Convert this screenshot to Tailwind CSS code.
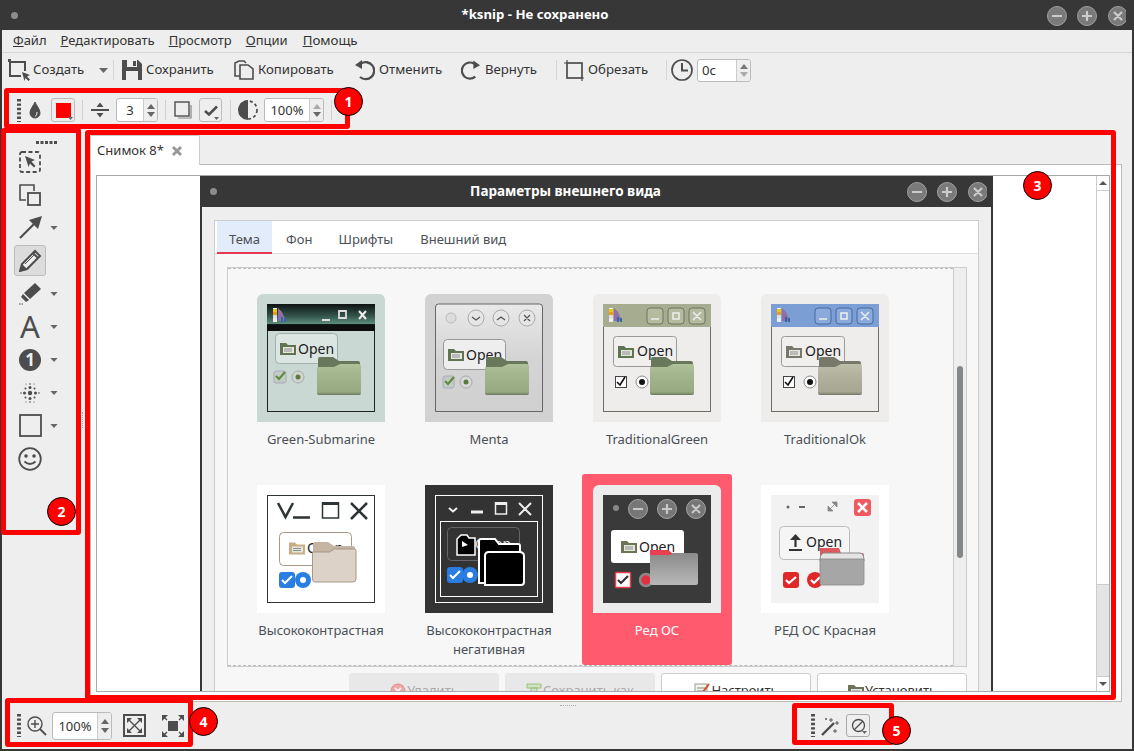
<!DOCTYPE html>
<html lang="ru">
<head>
<meta charset="utf-8">
<title>ksnip</title>
<script src="https://cdn.jsdelivr.net/npm/@tailwindcss/browser@4"></script>
</head>
<body class="bg-[#373737]">
<svg class="absolute w-0 h-0" aria-hidden="true">
  <defs>
    <linearGradient id="shade" x1="0" y1="0" x2="0" y2="1"><stop offset="0" stop-color="#fff" stop-opacity=".12"/><stop offset=".9" stop-color="#000" stop-opacity=".08"/><stop offset="1" stop-color="#000" stop-opacity=".35"/></linearGradient>
    <linearGradient id="gray" x1="0" y1="0" x2="0" y2="1"><stop offset="0" stop-color="#8a8a8a"/><stop offset=".6" stop-color="#a6a6a6"/><stop offset="1" stop-color="#b8b8b8"/></linearGradient>
    <linearGradient id="sub" x1="0" y1="0" x2="0" y2="1"><stop offset="0" stop-color="#0e1312"/><stop offset=".45" stop-color="#34564c"/><stop offset=".75" stop-color="#5f907f"/><stop offset=".76" stop-color="#0c0f0e"/><stop offset="1" stop-color="#0c0f0e"/></linearGradient>
    <linearGradient id="menta" x1="0" y1="0" x2="0" y2="1"><stop offset="0" stop-color="#e9e9e9"/><stop offset=".5" stop-color="#d4d4d4"/><stop offset="1" stop-color="#d0d0d0"/></linearGradient>
    <symbol id="ft" viewBox="0 0 44 40"><path d="M1 14V3q0-2 2-2h13l6 4h19q2 0 2 2v7z" fill="currentColor"/></symbol>
    <symbol id="fb" viewBox="0 0 44 40"><path d="M0 37V12q0-1 1-1h16l6-3h19q2 0 2 2v27q0 2-2 2H2q-2 0-2-2z" fill="currentColor"/><path d="M0 37V12q0-1 1-1h16l6-3h19q2 0 2 2v27q0 2-2 2H2q-2 0-2-2z" fill="url(#shade)"/></symbol>
    <symbol id="sf" viewBox="0 0 16 14"><path d="M0 13V1h6l2 2h8v10z" fill="currentColor"/><rect x="3" y="5" width="11" height="6" fill="#e6e6e0"/><path d="M4 7h8M4 9h8" stroke="#777" stroke-width=".8"/></symbol>
    <symbol id="pal" viewBox="0 0 16 16"><path d="M1 1h4v14H1z" fill="#eee"/><path d="M1 2h4v3H1z" fill="#f4c20d"/><path d="M1 5h4v3H1z" fill="#f09a1a"/><path d="M1 8h4v3H1z" fill="#ddd"/><path d="M6 1l4 4 4 9H6z" fill="#8e6fa8"/><path d="M9 10h2v5H9zM12 11h2v4h-2z" fill="#3465a4"/></symbol>
    <symbol id="hg" viewBox="0 0 4 23"><path d="M2 0v23" stroke="#4d4d4d" stroke-width="4" stroke-dasharray="2.4 2"/></symbol>
    <symbol id="dn" viewBox="0 0 9 5"><path d="M0 0h9L4.500 5z" fill="#666"/></symbol>
  </defs>
</svg>

<div class="relative w-[1134px] h-[751px] overflow-hidden bg-[#373737] px-[2px] pb-[2px] font-['Noto_Sans',sans-serif] text-[13px] text-[#333]">

  <!-- title -->
  <div class="h-[30px] flex items-center justify-between pl-[9px] pr-[6px]">
    <div class="w-[7px] h-[7px] rounded-full bg-[#8c8c8c]"></div>
    <div class="-mr-[6px] font-bold text-[13.2px] text-white">*ksnip - Не сохранено</div>
    <svg width="80" height="22" viewBox="0 0 80 22">
      <g fill="#7a7a7a" stroke="#a0a0a0"><circle cx="11" cy="12" r="9.500"/><circle cx="41" cy="12" r="9.500"/><circle cx="72" cy="12" r="9.500"/></g>
      <path d="M6 12h10M41 7v10M36 12h10M68 8l8 8M76 8l-8 8" stroke="#ccc" stroke-width="2.200" fill="none"/>
    </svg>
  </div>

  <div class="h-[719px] flex flex-col bg-[#eee]">
    <!-- menu -->
    <div class="h-[23px] flex items-center gap-[14px] pl-[11px] border-b border-[#d6d6d6]">
      <span><span class="underline">Ф</span>айл</span>
      <span><span class="underline">Р</span>едактировать</span>
      <span><span class="underline">П</span>росмотр</span>
      <span><span class="underline">О</span>пции</span>
      <span class="ml-[1px] text-[13.3px]"><span class="underline">П</span>омощь</span>
    </div>

    <!-- main toolbar -->
    <div class="h-[34px] flex items-center pl-[6px] text-[13.2px]">
      <div class="w-[91px] flex items-center">
        <svg width="24" height="24" viewBox="0 0 24 24" class="-ml-[1px] mr-[2px]"><path d="M3 4h15v9M3 4v14h11" fill="none" stroke="#4d4d4d" stroke-width="2"/><path d="M1 1h3v3H1z" fill="#4d4d4d"/><path d="M15 14l8 3-3 1.500 3 3-1.500 1.500-3-3-1 3z" fill="#4d4d4d"/></svg>
        <span>Создать</span>
      </div>
      <div class="w-[14px]"><svg width="9" height="5" class="block"><use href="#dn"/></svg></div>
      <div class="w-[9px] h-[20px]"><div class="w-px h-full bg-[#d6d6d6]"></div></div>
      <div class="w-[112px] flex items-center gap-[4px]">
        <svg width="20" height="20" viewBox="0 0 20 20"><path fill-rule="evenodd" d="M0 0h16l4 4v16H0zM5 0v7h10V0zM4 11v9h12v-9z" fill="#4d4d4d"/><path d="M11 1h3v5h-3z" fill="#4d4d4d"/></svg>
        <span>Сохранить</span>
      </div>
      <div class="w-[120px] flex items-center gap-[4px]">
        <svg width="20" height="20" viewBox="0 0 20 20"><path d="M6 16H1V3l4-2h5l2 2" fill="none" stroke="#4d4d4d" stroke-width="1.600"/><path d="M6 5h8l5 4v10H6z" fill="#eee" stroke="#4d4d4d" stroke-width="1.600"/></svg>
        <span>Копировать</span>
      </div>
      <div class="w-[107px] flex items-center gap-[4px]">
        <svg width="21" height="22" viewBox="0 0 21 22"><path d="M7 4.500A8.500 8.500 0 1 1 6 18" fill="none" stroke="#4d4d4d" stroke-width="2.300"/><path d="M1 6l7-5v9z" fill="#4d4d4d"/></svg>
        <span>Отменить</span>
      </div>
      <div class="w-[95px] flex items-center gap-[4px]">
        <svg width="20" height="22" viewBox="0 0 21 22"><path d="M14 4.500A8.500 8.500 0 1 0 15 18" fill="none" stroke="#4d4d4d" stroke-width="2.300"/><path d="M20 6l-7-5v9z" fill="#4d4d4d"/></svg>
        <span>Вернуть</span>
      </div>
      <div class="w-[8px] h-[20px]"><div class="w-px h-full bg-[#d6d6d6]"></div></div>
      <div class="w-[102px] flex items-center gap-[4px]">
        <svg width="20" height="21" viewBox="0 0 20 21"><rect x="3" y="3" width="15" height="15" fill="none" stroke="#4d4d4d" stroke-width="1.700"/><path d="M3 0v3M0 3h3M18 18v3M18 18h2" stroke="#4d4d4d" stroke-width="1.200"/></svg>
        <span>Обрезать</span>
      </div>
      <div class="w-[5px] h-[20px]"><div class="w-px h-full bg-[#d6d6d6]"></div></div>
      <div class="w-[26px]">
        <svg width="22" height="22" viewBox="0 0 22 22"><circle cx="11" cy="11" r="10" fill="none" stroke="#4d4d4d" stroke-width="1.700"/><path d="M11 4v7.500h6" fill="none" stroke="#4d4d4d" stroke-width="2"/></svg>
      </div>
      <div class="w-[54px] h-[23px] flex border border-[#bbb] rounded-[3px] bg-white overflow-hidden">
        <div class="flex-1 pl-[4px] leading-[21px]">0с</div>
        <div class="w-[14px] bg-[#eee] border-l border-[#ccc] flex flex-col items-center justify-center gap-[3px]"><div class="w-0 h-0 border-x-[4px] border-x-transparent border-b-[5px] border-b-[#777]"></div><div class="w-0 h-0 border-x-[4px] border-x-transparent border-t-[5px] border-t-[#aaa]"></div></div>
      </div>
    </div>

    <!-- tool settings toolbar -->
    <div class="h-[43px] flex items-center pl-[15px] pt-[3px]">
      <svg width="4" height="23" class="mr-[8px]"><use href="#hg"/></svg>
      <svg width="12" height="18" viewBox="0 0 12 18" class="mr-[10px]"><path d="M6 1C5 4 1 8 1 12a5 5 0 0 0 10 0C11 8 7 4 6 1z" fill="#4d4d4d" stroke="#4d4d4d"/><path d="M8 11a3 4 0 0 1-2 4.500" stroke="#eee" fill="none"/></svg>
      <div class="w-[24px] h-[24px] border border-[#bbb] rounded-[3px] flex items-center justify-center relative">
        <div class="w-[15px] h-[15px] bg-[#f00]"></div>
        <svg width="5" height="3" class="absolute right-[1px] bottom-[1px]"><use href="#dn"/></svg>
      </div>
      <div class="ml-[7px] w-px h-[20px] bg-[#d0d0d0]"></div>
      <svg width="18" height="18" viewBox="0 0 18 18" class="ml-[8px]"><path d="M0 9h18" stroke="#4d4d4d" stroke-width="2"/><path d="M9 1.500L5.500 6h7zM9 16.500L5.500 12h7z" fill="#4d4d4d"/></svg>
      <div class="ml-[7px] w-[42px] h-[24px] flex border border-[#bbb] rounded-[3px] bg-white overflow-hidden">
        <div class="flex-1 text-center leading-[22px]">3</div>
        <div class="w-[14px] bg-[#eee] border-l border-[#ccc] flex flex-col items-center justify-center gap-[3px]"><div class="w-0 h-0 border-x-[4px] border-x-transparent border-b-[5px] border-b-[#666]"></div><div class="w-0 h-0 border-x-[4px] border-x-transparent border-t-[5px] border-t-[#666]"></div></div>
      </div>
      <div class="ml-[7px] w-px h-[20px] bg-[#d0d0d0]"></div>
      <svg width="18" height="19" viewBox="0 0 18 19" class="ml-[8px]"><rect x="1" y="1" width="14" height="14" fill="none" stroke="#4d4d4d" stroke-width="1.400"/><path d="M17 4v13H4" fill="none" stroke="#888" stroke-width="1.200"/></svg>
      <div class="ml-[7px] w-[23px] h-[24px] border border-[#bbb] rounded-[3px] flex items-center justify-center relative">
        <svg width="14" height="11" viewBox="0 0 14 11"><path d="M1 6l4 3.500L13 1.500" fill="none" stroke="#4d4d4d" stroke-width="2.500"/></svg>
        <svg width="5" height="3" class="absolute right-[2px] bottom-[1px]"><use href="#dn"/></svg>
      </div>
      <div class="ml-[8px] w-px h-[20px] bg-[#d0d0d0]"></div>
      <svg width="20" height="20" viewBox="0 0 20 20" class="ml-[7px]"><path d="M10 0a10 10 0 0 0 0 20z" fill="#4d4d4d"/><circle cx="10" cy="10" r="9" fill="none" stroke="#4d4d4d" stroke-width="1.700" stroke-dasharray="3 2.500"/></svg>
      <div class="ml-[6px] w-[60px] h-[24px] flex border border-[#bbb] rounded-[3px] bg-white overflow-hidden">
        <div class="flex-1 text-center leading-[22px]">100%</div>
        <div class="w-[14px] bg-[#eee] border-l border-[#ccc] flex flex-col items-center justify-center gap-[3px]"><div class="w-0 h-0 border-x-[4px] border-x-transparent border-b-[5px] border-b-[#aaa]"></div><div class="w-0 h-0 border-x-[4px] border-x-transparent border-t-[5px] border-t-[#666]"></div></div>
      </div>
      <div class="ml-[7px] w-px h-[20px] bg-[#d0d0d0]"></div>
    </div>

    <!-- body -->
    <div class="h-[572px] flex">
      <!-- tools -->
      <div class="w-[80px] shrink-0 pt-[11px]">
        <svg width="22" height="3" class="block ml-[34px] mb-[1px]"><path d="M0 1.500h22" stroke="#4d4d4d" stroke-width="3" stroke-dasharray="3 1.500"/></svg>
        <div class="h-[33px] pl-[12px] flex items-center"><div class="w-[32px] h-[31px] flex items-center justify-center">
          <svg width="22" height="22" viewBox="0 0 22 22"><rect x="1" y="1" width="20" height="20" rx="2" fill="none" stroke="#4d4d4d" stroke-width="1.800" stroke-dasharray="4 2.500"/><path d="M6 5l10 4-3.500 1.500L16.500 15 15 16.500 11 12.500 9.500 16z" fill="#4d4d4d"/></svg>
        </div></div>
        <div class="h-[33px] pl-[12px] flex items-center"><div class="w-[32px] h-[31px] flex items-center justify-center">
          <svg width="22" height="22" viewBox="0 0 22 22"><path d="M7 16H1V1h14v6" fill="none" stroke="#4d4d4d" stroke-width="1.600"/><rect x="9" y="9" width="12" height="12" fill="none" stroke="#4d4d4d" stroke-width="1.800"/></svg>
        </div></div>
        <div class="h-[33px] pl-[12px] flex items-center"><div class="w-[32px] h-[31px] flex items-center justify-center">
          <svg width="23" height="23" viewBox="0 0 23 23"><path d="M1 22L17 6" stroke="#4d4d4d" stroke-width="2.200"/><path d="M23 0l-4 13-9-9z" fill="#4d4d4d"/></svg>
        </div><svg width="8" height="4" class="ml-[4px]"><use href="#dn"/></svg></div>
        <div class="h-[33px] pl-[12px] flex items-center"><div class="w-[32px] h-[31px] flex items-center justify-center bg-[#dcdcdc] border border-[#bbb] rounded-[3px]">
          <svg width="23" height="23" viewBox="0 0 23 23"><path d="M1 22l2-7L16 2l5 5L8 20z" fill="#eee" stroke="#4d4d4d" stroke-width="2"/><path d="M1 22l2-7 5 5z" fill="#4d4d4d"/><path d="M14 4l5 5" stroke="#4d4d4d" stroke-width="2"/><path d="M6 15L16 5" stroke="#4d4d4d"/></svg>
        </div></div>
        <div class="h-[33px] pl-[12px] flex items-center"><div class="w-[32px] h-[31px] flex items-center justify-center">
          <svg width="23" height="23" viewBox="0 0 23 23"><path d="M16 1l6 6L11 17l-6-6z" fill="#4d4d4d"/><path d="M4 12l6 6-3 2-5-5z" fill="#4d4d4d"/><path d="M0 22h5" stroke="#4d4d4d" stroke-dasharray="1.500 1"/></svg>
        </div><svg width="8" height="4" class="ml-[4px]"><use href="#dn"/></svg></div>
        <div class="h-[33px] pl-[12px] flex items-center"><div class="w-[32px] h-[31px] flex items-center justify-center text-[31px] leading-none text-[#4d4d4d]">A</div><svg width="8" height="4" class="ml-[4px]"><use href="#dn"/></svg></div>
        <div class="h-[33px] pl-[12px] flex items-center"><div class="w-[32px] h-[31px] flex items-center justify-center"><div class="w-[22px] h-[22px] rounded-full bg-[#4d4d4d] text-[#eee] font-bold text-[17px] leading-[22px] text-center">1</div></div><svg width="8" height="4" class="ml-[4px]"><use href="#dn"/></svg></div>
        <div class="h-[33px] pl-[12px] flex items-center"><div class="w-[32px] h-[31px] flex items-center justify-center">
          <svg width="20" height="20" viewBox="0 0 20 20" fill="#4d4d4d"><circle cx="10" cy="10" r="2.200"/><circle cx="4.500" cy="10" r="1.500"/><circle cx="15.500" cy="10" r="1.500"/><circle cx="10" cy="4.500" r="1.500"/><circle cx="10" cy="15.500" r="1.500"/><circle cx="5.500" cy="5.500" r="1"/><circle cx="14.500" cy="5.500" r="1"/><circle cx="5.500" cy="14.500" r="1"/><circle cx="14.500" cy="14.500" r="1"/><circle cx="10" cy="1" r=".8"/><circle cx="10" cy="19" r=".8"/><circle cx="1" cy="10" r=".8"/><circle cx="19" cy="10" r=".8"/><circle cx="6" cy="1" r=".6"/><circle cx="14" cy="1" r=".6"/><circle cx="6" cy="19" r=".6"/><circle cx="14" cy="19" r=".6"/></svg>
        </div><svg width="8" height="4" class="ml-[4px]"><use href="#dn"/></svg></div>
        <div class="h-[33px] pl-[12px] flex items-center"><div class="w-[32px] h-[31px] flex items-center justify-center">
          <svg width="23" height="23" viewBox="0 0 23 23"><rect x="1" y="1" width="21" height="21" fill="none" stroke="#4d4d4d" stroke-width="1.800"/></svg>
        </div><svg width="8" height="4" class="ml-[4px]"><use href="#dn"/></svg></div>
        <div class="h-[33px] pl-[12px] flex items-center"><div class="w-[32px] h-[31px] flex items-center justify-center">
          <svg width="24" height="24" viewBox="0 0 24 24"><circle cx="12" cy="12" r="10.800" fill="none" stroke="#4d4d4d" stroke-width="1.800"/><circle cx="8" cy="9" r="1.800" fill="#4d4d4d"/><circle cx="16" cy="9" r="1.800" fill="#4d4d4d"/><path d="M6.500 14.500q5.500 5 11 0" fill="none" stroke="#4d4d4d" stroke-width="1.800"/></svg>
        </div></div>
      </div>

      <!-- document area -->
      <div class="ml-[8px] w-[1032px] pt-[5px] flex flex-col">
        <div class="h-[29px] flex">
          <div class="w-[110px] h-[30px] z-10 bg-white border-x border-t border-[#ccc] rounded-t-[2px] flex items-center pl-[6px]">
            <span>Снимок 8*</span>
            <svg width="12" height="12" viewBox="0 0 12 12" class="ml-[7px]"><path d="M2 2l8 8M10 2l-8 8" stroke="#9a9a9a" stroke-width="3"/></svg>
          </div>
        </div>
        <div class="flex-1 min-h-0 bg-white border border-[#bbb] pt-[10px] pl-[5px]">
          <div class="w-[1014px] h-[517px] border border-[#aaa] flex overflow-hidden">
            <div class="w-[103px] shrink-0"></div>

            <!-- the captured dialog -->
            <div class="w-[793px] shrink-0 flex flex-col">
              <div class="h-[31px] shrink-0 bg-[#373737] flex items-center pl-[10px] pr-[6px] justify-between">
                <div class="w-[7px] h-[7px] rounded-full bg-[#8c8c8c]"></div>
                <div class="ml-[7px] font-bold text-[13.5px] text-white">Параметры внешнего вида</div>
                <svg width="80" height="22" viewBox="0 0 80 22">
                  <g fill="#7a7a7a" stroke="#a0a0a0"><circle cx="10" cy="11" r="9.500"/><circle cx="40" cy="11" r="9.500"/><circle cx="71" cy="11" r="9.500"/></g>
                  <path d="M5 11h10M40 6v10M35 11h10M67 7l8 8M75 7l-8 8" stroke="#ccc" stroke-width="2.200" fill="none"/>
                </svg>
              </div>
              <div class="flex-1 bg-[#eee] border-x-2 border-[#373737] pt-[13px] pl-[12px] pr-[13px]">
                <div class="w-[765px] h-[500px] bg-[#f7f7f7] border border-[#ccc] border-b-0">
                  <div class="h-[33px] bg-white border-b border-[#ddd] flex pl-[2px] text-[#4a4f55]">
                    <div class="px-[12px] h-[33px] bg-[#e3ecfa] border-b-2 border-[#e6394f] leading-[36px]">Тема</div>
                    <div class="ml-[1px] px-[13px] leading-[36px]">Фон</div>
                    <div class="px-[13px] leading-[36px]">Шрифты</div>
                    <div class="px-[14px] leading-[36px]">Внешний вид</div>
                  </div>
                  <div class="pt-[13px] pl-[12px]">
                    <div class="w-[740px] h-[400px] border border-[#ccc] flex bg-[#f7f7f7]">
                      <div class="flex-1 border-y border-dashed border-[#bbb] pt-[14px] pl-[9px] overflow-hidden">
                        <div class="grid grid-cols-[repeat(4,168px)] auto-rows-[191px]">

                          <div class="w-[150px] mx-auto pt-[11px] flex flex-col items-center text-[#4a4f55]">
                            <svg width="128" height="128" viewBox="0 0 128 128">
                              <path d="M0 128V6a6 6 0 0 1 6-6h116a6 6 0 0 1 6 6v122z" fill="#c9d8d3"/>
                              <rect x="10.500" y="10.500" width="107" height="107" fill="#c9d8d3" stroke="#1e2422"/>
                              <rect x="10" y="10" width="108" height="27" fill="url(#sub)"/>
                              <use href="#pal" x="15" y="13" width="16" height="16"/>
                              <path d="M65 26h8M82 17h7v7h-7z" fill="none" stroke="#ddd" stroke-width="1.800"/>
                              <path d="M102 17l7 8M109 17l-7 8" stroke="#eee" stroke-width="2"/>
                              <rect x="18.500" y="39.500" width="62" height="30" rx="4" fill="#dbe6e2" stroke="#9fb0aa"/>
                              <use href="#sf" x="23" y="48" width="16" height="14" color="#5f7450"/>
                              <text x="41" y="60" font-family="Noto Sans" font-size="14" fill="#222">Open</text>
                              <rect x="17" y="77" width="12" height="12" rx="2" fill="#c2ccc2" stroke="#aab"/><path d="M19 82l3 3 6-7" fill="none" stroke="#5c8a3a" stroke-width="2"/>
                              <circle cx="41" cy="83" r="6" fill="#cfd5d0" stroke="#aaa"/><circle cx="41" cy="83" r="2.500" fill="#5c7a3a"/>
                              <use href="#ft" x="60" y="62" width="44" height="40" color="#67795a"/><use href="#fb" x="60" y="62" width="44" height="40" color="#a5b98d"/>
                            </svg>
                            <div class="mt-[8px] leading-[19px] text-center">Green-Submarine</div>
                          </div>

                          <div class="w-[150px] mx-auto pt-[11px] flex flex-col items-center text-[#4a4f55]">
                            <svg width="128" height="128" viewBox="0 0 128 128">
                              <path d="M0 128V6a6 6 0 0 1 6-6h116a6 6 0 0 1 6 6v122z" fill="#d2d2d2"/>
                              <path d="M10.500 117.500V13a3 3 0 0 1 3-3h101a3 3 0 0 1 3 3v104.500z" fill="url(#menta)" stroke="#666"/>
                              <circle cx="26" cy="24" r="5" fill="#ddd" stroke="#bbb"/>
                              <g fill="#e6e6e6" stroke="#aaa"><circle cx="51" cy="24" r="8"/><circle cx="76" cy="24" r="8"/><circle cx="102" cy="24" r="8"/></g>
                              <path d="M47 23l4 3 4-3M72 26l4-3 4 3M99 21l6 6M105 21l-6 6" fill="none" stroke="#555" stroke-width="1.300"/>
                              <rect x="18.500" y="45.500" width="62" height="30" rx="4" fill="#eee" stroke="#999"/>
                              <use href="#sf" x="23" y="54" width="16" height="14" color="#5f7450"/>
                              <text x="41" y="66" font-family="Noto Sans" font-size="14" fill="#222">Open</text>
                              <rect x="18" y="82" width="11" height="12" rx="2" fill="#c4cbc4" stroke="#aab"/><path d="M20 87l3 3 6-7" fill="none" stroke="#5c8a3a" stroke-width="2"/>
                              <circle cx="41" cy="88" r="6" fill="#d8d8d8" stroke="#aaa"/><circle cx="41" cy="88" r="2.500" fill="#5c7a3a"/>
                              <use href="#ft" x="60" y="62" width="44" height="40" color="#67795a"/><use href="#fb" x="60" y="62" width="44" height="40" color="#a5b98d"/>
                            </svg>
                            <div class="mt-[8px] leading-[19px] text-center">Menta</div>
                          </div>

                          <div class="w-[150px] mx-auto pt-[11px] flex flex-col items-center text-[#4a4f55]">
                            <svg width="128" height="128" viewBox="0 0 128 128">
                              <path d="M0 128V6a6 6 0 0 1 6-6h116a6 6 0 0 1 6 6v122z" fill="#eeedeb"/>
                              <rect x="10.500" y="10.500" width="107" height="107" fill="#eeedeb" stroke="#6f6f68"/>
                              <rect x="10" y="10" width="108" height="23" fill="#a5ac90"/>
                              <use href="#pal" x="15" y="13" width="16" height="16"/>
                              <g fill="#b4bb9f" stroke="#6f7560"><rect x="54" y="14" width="16" height="16" rx="3"/><rect x="75" y="14" width="16" height="16" rx="3"/><rect x="96" y="14" width="16" height="16" rx="3"/></g>
                              <path d="M58 25h8M80 19h6v6h-6zM100 18l8 8M108 18l-8 8" fill="none" stroke="#eee" stroke-width="1.500"/>
                              <rect x="20.500" y="42.500" width="63" height="30" rx="3" fill="#f0efed" stroke="#999"/>
                              <use href="#sf" x="25" y="51" width="16" height="14" color="#5f7450"/>
                              <text x="44" y="62" font-family="Noto Sans" font-size="14" fill="#222">Open</text>
                              <rect x="22.500" y="82.500" width="11" height="11" fill="#fff" stroke="#444"/><path d="M24 88l3 3 5-8" fill="none" stroke="#111" stroke-width="1.600"/>
                              <circle cx="49" cy="88" r="6" fill="#fff" stroke="#888"/><circle cx="49" cy="88" r="3" fill="#111"/>
                              <use href="#ft" x="57" y="62" width="44" height="40" color="#67795a"/><use href="#fb" x="57" y="62" width="44" height="40" color="#a5b98d"/>
                            </svg>
                            <div class="mt-[8px] leading-[19px] text-center">TraditionalGreen</div>
                          </div>

                          <div class="w-[150px] mx-auto pt-[11px] flex flex-col items-center text-[#4a4f55]">
                            <svg width="128" height="128" viewBox="0 0 128 128">
                              <path d="M0 128V6a6 6 0 0 1 6-6h116a6 6 0 0 1 6 6v122z" fill="#eeedeb"/>
                              <rect x="10.500" y="10.500" width="107" height="107" fill="#eeedeb" stroke="#6f6f68"/>
                              <rect x="10" y="10" width="108" height="23" fill="#7b9fd4"/>
                              <use href="#pal" x="15" y="13" width="16" height="16"/>
                              <g fill="#8aaadb" stroke="#46699f"><rect x="54" y="14" width="16" height="16" rx="3"/><rect x="75" y="14" width="16" height="16" rx="3"/><rect x="96" y="14" width="16" height="16" rx="3"/></g>
                              <path d="M58 25h8M80 19h6v6h-6zM100 18l8 8M108 18l-8 8" fill="none" stroke="#eee" stroke-width="1.500"/>
                              <rect x="20.500" y="42.500" width="63" height="30" rx="3" fill="#f0efed" stroke="#999"/>
                              <use href="#sf" x="25" y="51" width="16" height="14" color="#77786a"/>
                              <text x="44" y="62" font-family="Noto Sans" font-size="14" fill="#222">Open</text>
                              <rect x="22.500" y="82.500" width="11" height="11" fill="#fff" stroke="#444"/><path d="M24 88l3 3 5-8" fill="none" stroke="#111" stroke-width="1.600"/>
                              <circle cx="49" cy="88" r="6" fill="#fff" stroke="#888"/><circle cx="49" cy="88" r="3" fill="#111"/>
                              <use href="#ft" x="57" y="62" width="44" height="40" color="#78796a"/><use href="#fb" x="57" y="62" width="44" height="40" color="#b5b5a0"/>
                            </svg>
                            <div class="mt-[8px] leading-[19px] text-center">TraditionalOk</div>
                          </div>

                          <div class="w-[150px] mx-auto pt-[11px] flex flex-col items-center text-[#4a4f55]">
                            <svg width="128" height="128" viewBox="0 0 128 128">
                              <rect width="128" height="128" fill="#fff"/>
                              <rect x="10.500" y="10.500" width="107" height="107" fill="#fff" stroke="#2e3436"/>
                              <path d="M21 18l7.500 14L36 18M36 32.500h17M94 18l16 16M110 18L94 34" fill="none" stroke="#2e3436" stroke-width="2.500"/>
                              <rect x="65.500" y="18" width="16" height="15" fill="none" stroke="#2e3436" stroke-width="1.500"/><rect x="65" y="17" width="17" height="3" fill="#2e3436"/>
                              <rect x="22.500" y="47.500" width="72" height="33" rx="4" fill="#fff" stroke="#a79887"/>
                              <use href="#sf" x="32" y="56" width="16" height="15" color="#c9ae85"/>
                              <text x="50" y="68" font-family="Noto Sans" font-size="14" fill="#222">Open</text>
                              <rect x="22" y="87" width="16" height="16" rx="3" fill="#2a7de1"/><path d="M25 95l3 3 7-7" fill="none" stroke="#fff" stroke-width="2"/>
                              <circle cx="46" cy="95" r="8" fill="#2a7de1"/><circle cx="46" cy="95" r="3" fill="#fff"/>
                              <use href="#ft" x="55" y="54" width="44" height="44" color="#c4b4a2"/>
                              <path d="M55.500 94V68q0-1 1-1h16l5-3h20q1.500 0 1.500 1.500V94q0 3-3 3H58q-2.500 0-2.500-3z" fill="#dcd2c7" stroke="#a79887"/>
                            </svg>
                            <div class="mt-[8px] leading-[19px] text-center">Высококонтрастная</div>
                          </div>

                          <div class="w-[150px] mx-auto pt-[11px] flex flex-col items-center text-[#4a4f55]">
                            <svg width="128" height="128" viewBox="0 0 128 128">
                              <rect width="128" height="128" fill="#333"/>
                              <rect x="10.500" y="10.500" width="107" height="107" fill="#333" stroke="#fff"/>
                              <rect x="15.500" y="36.500" width="97" height="75" fill="none" stroke="#fff"/>
                              <path d="M24 23l4 3.500 4-3.500M94 18l12 12M106 18L94 30" fill="none" stroke="#eee" stroke-width="2"/>
                              <path d="M46 27h12" stroke="#eee" stroke-width="3"/>
                              <rect x="70.500" y="18" width="11" height="11" fill="none" stroke="#eee" stroke-width="1.500"/><rect x="70" y="17" width="12" height="3" fill="#eee"/>
                              <rect x="22.500" y="42.500" width="72" height="33" rx="4" fill="#333" stroke="#666"/>
                              <path d="M32 70V54l4-4h6l2 3h6v17z" fill="#000" stroke="#fff" stroke-width="1.500"/><path d="M37 62v-6l6 4z" fill="#fff"/>
                              <text x="50" y="64" font-family="Noto Sans" font-size="14" fill="#ddd">Open</text>
                              <rect x="22" y="82" width="16" height="16" rx="3" fill="#2a7de1"/><path d="M25 90l3 3 7-7" fill="none" stroke="#fff" stroke-width="2"/>
                              <circle cx="45" cy="90" r="8" fill="#2a7de1"/><circle cx="45" cy="90" r="3" fill="#fff"/>
                              <path d="M54 98V56q0-2 2-2h14l4 5h19q2 0 2 2v37z" fill="#000" stroke="#fff" stroke-width="2"/>
                              <path d="M60 100V71q0-4 4-4h30q5 0 5 4v26q0 3-3 3z" fill="#000" stroke="#fff" stroke-width="2"/>
                            </svg>
                            <div class="mt-[8px] leading-[19px] text-center">Высококонтрастная<br>негативная</div>
                          </div>

                          <div class="w-[150px] mx-auto pt-[11px] flex flex-col items-center bg-[#ff5a6e] rounded-[3px] text-white">
                            <svg width="128" height="128" viewBox="0 0 128 128">
                              <path d="M0 128V6a6 6 0 0 1 6-6h116a6 6 0 0 1 6 6v122z" fill="#ececec"/>
                              <rect x="10" y="10" width="108" height="108" fill="#3a3a3a"/>
                              <circle cx="23" cy="23" r="3" fill="#888"/>
                              <g fill="#777" stroke="#a5a5a5"><circle cx="45" cy="24" r="9.500"/><circle cx="74" cy="24" r="9.500"/><circle cx="103" cy="24" r="9.500"/></g>
                              <path d="M40 24h10M74 19v10M69 24h10M99 20l8 8M107 20l-8 8" fill="none" stroke="#c8c8c8" stroke-width="2.200"/>
                              <rect x="18" y="45" width="73" height="33" rx="3" fill="#fff"/>
                              <use href="#sf" x="28" y="55" width="16" height="14" color="#6d7355"/>
                              <text x="46" y="67" font-family="Noto Sans" font-size="14" fill="#222">Open</text>
                              <rect x="22.500" y="87.500" width="15" height="15" rx="1" fill="#fff" stroke="#e0404f" stroke-width="1.500"/><path d="M25 95l3 3 7-7" fill="none" stroke="#333" stroke-width="2.200"/>
                              <circle cx="53" cy="95" r="6" fill="#e0303f" stroke="#888" stroke-width="2.500"/>
                              <path d="M57 72V65h18l4 3h24v6z" fill="#e8404e"/>
                              <path d="M57 98V70h20l3-2h23q2 0 2 2v28q0 2-2 2H59q-2 0-2-2z" fill="url(#gray)"/>
                            </svg>
                            <div class="mt-[8px] leading-[19px] text-center">Ред ОС</div>
                          </div>

                          <div class="w-[150px] mx-auto pt-[11px] flex flex-col items-center text-[#4a4f55]">
                            <svg width="128" height="128" viewBox="0 0 128 128">
                              <rect width="128" height="128" fill="#fff"/>
                              <rect x="10" y="10" width="108" height="108" fill="#f2f2f2"/>
                              <circle cx="27" cy="22" r="1.500" fill="#666"/><path d="M38 22h6" stroke="#666" stroke-width="2"/>
                              <path d="M67 26l8-8M67 26v-5l5 5zM76 17v5l-5-5z" fill="#888" stroke="#888" stroke-width=".8"/>
                              <rect x="93" y="14" width="17" height="17" rx="3" fill="#ee5a5f"/><path d="M97 18l9 9M106 18l-9 9" stroke="#fff" stroke-width="2.500"/>
                              <rect x="18.500" y="41.500" width="70" height="33" rx="4" fill="#f5f5f5" stroke="#bbb"/>
                              <path d="M28 65h13M34.500 51v11" stroke="#333" stroke-width="2.200"/><path d="M34.500 49l5.500 6H29z" fill="#333"/>
                              <text x="45" y="62" font-family="Noto Sans" font-size="14" fill="#222">Open</text>
                              <rect x="22" y="87" width="16" height="16" rx="3" fill="#e02828"/><path d="M25 95l3 3 7-6" fill="none" stroke="#fff" stroke-width="2.200"/>
                              <circle cx="54" cy="95" r="8" fill="#e02828"/><path d="M50 95l3 3 6-6" fill="none" stroke="#fff" stroke-width="2.200"/>
                              <path d="M59 72v-9h19l2 5h21q2 0 2 2v4z" fill="#dd5a5f"/>
                              <path d="M59 76q0-8 4-8h36q4 0 4 8z" fill="#e4e4e4" stroke="#888"/>
                              <path d="M59 98V74h44v24q0 2-2 2H61q-2 0-2-2z" fill="#a6a6a6" stroke="#888" stroke-width=".8"/>
                            </svg>
                            <div class="mt-[8px] leading-[19px] text-center">РЕД ОС Красная</div>
                          </div>
                        </div>
                      </div>
                      <div class="w-[13px] bg-[#eee] border-l border-[#ccc]">
                        <div class="mt-[98px] mx-auto w-[6px] h-[192px] rounded-full bg-[#85888b]"></div>
                      </div>
                    </div>
                    <div class="mt-[6px] flex justify-end gap-[6px] w-[740px]">
                      <div class="w-[150px] h-[36px] rounded-[3px] bg-[#e8e8e8] text-[#aaa] flex items-center justify-center gap-[1px]"><svg width="16" height="16" viewBox="0 0 16 16"><circle cx="8" cy="8" r="7" fill="#eaa" stroke="#e08a8a"/><path d="M5 5l6 6M11 5l-6 6" stroke="#fff" stroke-width="1.500"/></svg>Удалить</div>
                      <div class="w-[150px] h-[36px] rounded-[3px] bg-[#e8e8e8] text-[#aaa] flex items-center justify-center gap-[1px]"><svg width="16" height="16" viewBox="0 0 16 16"><path d="M1 1h14v4H1zM5 5h6v9H5z" fill="#cfe3c0" stroke="#9cc080"/></svg>Сохранить как</div>
                      <div class="w-[150px] h-[36px] rounded-[3px] bg-white border border-[#ccc] flex items-center justify-center gap-[1px]"><svg width="16" height="16" viewBox="0 0 16 16"><rect x="1" y="1" width="12" height="14" fill="#f4f4ea" stroke="#999"/><path d="M3 5h8M3 8h8" stroke="#888"/><path d="M15 1l-6 8" stroke="#d05030" stroke-width="2"/></svg>Настроить</div>
                      <div class="w-[150px] h-[36px] rounded-[3px] bg-white border border-[#ccc] flex items-center justify-center gap-[1px]"><svg width="16" height="14"><use href="#sf" color="#6d7355"/></svg>Установить</div>
                    </div>
                  </div>
                </div>
              </div>
            </div>

            <div class="flex-1"></div>
            <!-- outer scrollbar -->
            <div class="w-[13px] shrink-0 border-l border-[#ccc] flex flex-col bg-white">
              <div class="h-[15px] border-b border-[#ccc] flex items-center justify-center"><div class="w-0 h-0 border-x-[4px] border-x-transparent border-b-[4px] border-b-[#555]"></div></div>
              <div class="h-[394px] border-b border-[#ccc]"></div>
              <div class="flex-1 bg-[#e4e4e4]"></div>
              <div class="h-[15px] bg-white border-t border-[#ccc] flex items-center justify-center"><div class="w-0 h-0 border-x-[4px] border-x-transparent border-t-[4px] border-t-[#555]"></div></div>
            </div>
          </div>
        </div>
      </div>
    </div>

    <!-- bottom bar -->
    <div class="h-[47px] flex items-center justify-between">
      <div class="flex items-center pl-[15px]">
        <svg width="4" height="23" class="mr-[6px]"><use href="#hg"/></svg>
        <svg width="20" height="20" viewBox="0 0 20 20" class="mr-[5px]"><circle cx="8" cy="8" r="7" fill="none" stroke="#4d4d4d" stroke-width="1.400"/><path d="M13 13l6 6" stroke="#4d4d4d" stroke-width="1.800"/><path d="M8 4v8M4 8h8" stroke="#4d4d4d" stroke-width="1.400"/></svg>
        <div class="w-[60px] h-[28px] flex border border-[#bbb] rounded-[3px] bg-white overflow-hidden">
          <div class="flex-1 text-center leading-[26px]">100%</div>
          <div class="w-[14px] bg-[#eee] border-l border-[#ccc] flex flex-col items-center justify-center gap-[4px]"><div class="w-0 h-0 border-x-[4px] border-x-transparent border-b-[5px] border-b-[#666]"></div><div class="w-0 h-0 border-x-[4px] border-x-transparent border-t-[5px] border-t-[#666]"></div></div>
        </div>
        <svg width="23" height="23" viewBox="0 0 23 23" class="ml-[11px]"><rect x="1" y="1" width="21" height="21" fill="none" stroke="#4d4d4d" stroke-width="2"/><path d="M5 5l13 13M18 5L5 18" stroke="#4d4d4d" stroke-width="1.400"/><path d="M4 4h5L4 9zM19 4v5l-5-5zM4 19v-5l5 5zM19 19h-5l5-5z" fill="#4d4d4d"/></svg>
        <svg width="24" height="24" viewBox="0 0 24 24" class="ml-[15px]"><rect x="7" y="7" width="10" height="10" fill="#4d4d4d"/><path d="M1 1h6L1 7zM23 1v6l-6-6zM1 23v-6l6 6zM23 23h-6l6-6z" fill="#4d4d4d"/><path d="M3 3l3 3M21 3l-3 3M3 21l3-3M21 21l-3-3" stroke="#4d4d4d" stroke-width="1.400"/></svg>
      </div>
      <div class="flex items-center mr-[262px]">
        <svg width="4" height="23" class="mr-[6px]"><use href="#hg"/></svg>
        <svg width="19" height="20" viewBox="0 0 19 20"><path d="M1 19L13 7" stroke="#4d4d4d" stroke-width="2.400"/><path d="M10 2v4M8 4h4M16 5v4M14 7h4M14 13v4M12 15h4M5 2v2M4 3h2" stroke="#4d4d4d" stroke-width=".9"/></svg>
        <div class="ml-[6px] w-[24px] h-[23px] border border-[#aaa] rounded-[3px] flex items-center justify-center relative">
          <svg width="15" height="15" viewBox="0 0 15 15"><circle cx="7.500" cy="7.500" r="6" fill="none" stroke="#4d4d4d" stroke-width="1.300"/><path d="M3.500 11.500l8-8" stroke="#4d4d4d" stroke-width="1.300"/></svg>
          <svg width="5" height="3" class="absolute right-[2px] bottom-[2px]"><use href="#dn"/></svg>
        </div>
      </div>
    </div>
  </div>

  <!-- splitter grips -->
  <div class="absolute left-[560px] top-[130px] w-[16px] border-t border-dotted border-[#aaa]"></div>
  <div class="absolute left-[560px] top-[705px] w-[16px] border-t border-dotted border-[#aaa]"></div>
  <div class="absolute left-[82px] top-[412px] h-[16px] border-l border-dotted border-[#aaa]"></div>

  <!-- annotation frames -->
  <div class="absolute left-[4px] top-[88px] w-[346px] h-[41px] border-[5px] border-[#f00] rounded-[3px]"></div>
  <div class="absolute left-[1px] top-[128px] w-[80px] h-[407px] border-[5px] border-[#f00] rounded-[3px]"></div>
  <div class="absolute left-[85px] top-[130px] w-[1031px] h-[570px] border-[5px] border-[#f00] rounded-[3px]"></div>
  <div class="absolute left-[5px] top-[698px] w-[188px] h-[49px] border-[5px] border-[#f00] rounded-[3px]"></div>
  <div class="absolute left-[792px] top-[703px] w-[102px] h-[42px] border-[5px] border-[#f00] rounded-[3px]"></div>

  <!-- annotation badges -->
  <div class="absolute left-[334px] top-[87px] w-[29px] h-[29px] rounded-full bg-[#f00] border border-black text-white font-bold text-[14px] leading-[27px] text-center">1</div>
  <div class="absolute left-[47px] top-[497px] w-[29px] h-[29px] rounded-full bg-[#f00] border border-black text-white font-bold text-[14px] leading-[27px] text-center">2</div>
  <div class="absolute left-[1023px] top-[171px] w-[29px] h-[29px] rounded-full bg-[#f00] border border-black text-white font-bold text-[14px] leading-[27px] text-center">3</div>
  <div class="absolute left-[189px] top-[707px] w-[29px] h-[29px] rounded-full bg-[#f00] border border-black text-white font-bold text-[14px] leading-[27px] text-center">4</div>
  <div class="absolute left-[882px] top-[716px] w-[29px] h-[29px] rounded-full bg-[#f00] border border-black text-white font-bold text-[14px] leading-[27px] text-center">5</div>
</div>
</body>
</html>
